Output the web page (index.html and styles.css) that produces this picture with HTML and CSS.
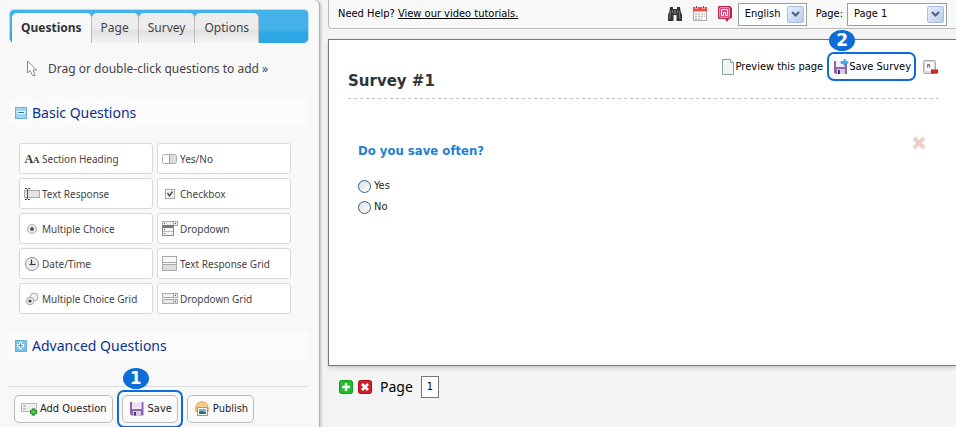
FILE: index.html
```html
<!DOCTYPE html>
<html lang="en">
<head>
<meta charset="utf-8">
<title>Survey editor</title>
<link rel="stylesheet" href="styles.css">
</head>
<body>
<div class="app">
  <aside class="sidebar">
    <nav class="tabs">
      <button class="tab tab-active" type="button">Questions</button>
      <button class="tab" type="button">Page</button>
      <button class="tab" type="button">Survey</button>
      <button class="tab" type="button">Options</button>
    </nav>
    <p class="hint">
      <svg width="12" height="17" viewBox="0 0 12 17"><path d="M1.500 1v12l2.500-2.500 2.500 5h2.500l-2-5.500h3.500z" fill="#fff" stroke="#888"/></svg>
      Drag or double-click questions to add »
    </p>
    <h2 class="group">
      <svg width="12" height="12" viewBox="0 0 12 12"><rect x=".5" y=".5" width="11" height="11" fill="#9fd3ee" stroke="#6aaedb"/><path d="M2 5.500h8" stroke="#fff" stroke-width="3"/><path d="M3 5.500h6" stroke="#2f76ad"/></svg>
      Basic Questions
    </h2>
    <div class="types">
      <button class="type" type="button"><span class="aa">A<small>A</small></span>Section Heading</button>
      <button class="type" type="button"><svg class="ico" viewBox="0 0 16 16"><rect x=".5" y="3.500" width="14" height="9" rx="2" fill="#fff" stroke="#aaa"/><path d="M8 4h4a2 2 0 0 1 2 2v4a2 2 0 0 1-2 2H8z" fill="#ddd"/><path d="M7.500 4v8" stroke="#999"/></svg>Yes/No</button>
      <button class="type" type="button"><svg class="ico" viewBox="0 0 16 16"><rect x=".5" y="4.500" width="15" height="7" fill="#e4e4e4" stroke="#aaa"/><path d="M1 2.500h2M4 2.500h2M1 13.500h2M4 13.500h2M3.500 3v10" stroke="#555" fill="none"/></svg>Text Response</button>
      <button class="type" type="button"><svg class="ico" viewBox="0 0 16 16"><rect x="3.500" y="3.500" width="9" height="9" fill="#f3f3f3" stroke="#aaa"/><path d="M5.500 7l2 3 3-4.500" fill="none" stroke="#555" stroke-width="1.500"/></svg>Checkbox</button>
      <button class="type" type="button"><svg class="ico" viewBox="0 0 16 16"><circle cx="8" cy="8" r="4.500" fill="#eee" stroke="#aaa"/><circle cx="8" cy="8" r="2" fill="#555"/></svg>Multiple Choice</button>
      <button class="type" type="button"><svg class="ico" viewBox="0 0 16 16"><rect x=".5" y=".5" width="15" height="4" fill="#eee" stroke="#aaa"/><path d="M11.500 1v3" stroke="#aaa"/><rect x="13" y="2" width="1" height="1" fill="#444"/><rect x=".5" y="4.500" width="11" height="10" fill="#f3f3f3" stroke="#888"/><rect x="1" y="4" width="10" height="3" fill="#777"/><path d="M1 10.500h10" stroke="#bbb"/><path d="M2 2.500h1M2 8.500h1M2 12.500h1" stroke="#444"/></svg>Dropdown</button>
      <button class="type" type="button"><svg class="ico" viewBox="0 0 16 16"><circle cx="8" cy="8" r="6.500" fill="#dcebe8" stroke="#8a9090"/><circle cx="8" cy="8" r="5" fill="none" stroke="#f8ffff"/><path d="M7.500 3.500v5h4M7 8.500H5.500" fill="none" stroke="#333" stroke-width="1.200"/></svg>Date/Time</button>
      <button class="type" type="button"><svg class="ico" viewBox="0 0 16 16"><rect x=".5" y=".5" width="14" height="14" fill="#f7f7f7" stroke="#aaa"/><rect x="1" y="9" width="13" height="5" fill="#ddd"/><path d="M1 6.500h13M1 8.500h13" stroke="#aaa"/></svg>Text Response Grid</button>
      <button class="type" type="button"><svg class="ico" viewBox="0 0 16 16"><circle cx="10" cy="6" r="4" fill="#eee" stroke="#aaa"/><circle cx="6" cy="10" r="3.800" fill="#eee" stroke="#aaa"/><circle cx="6" cy="10" r="1.600" fill="#444"/></svg>Multiple Choice Grid</button>
      <button class="type" type="button"><svg class="ico" viewBox="0 0 16 16"><rect x=".5" y="2.500" width="15" height="4" fill="#f3f3f3" stroke="#aaa"/><rect x=".5" y="8.500" width="15" height="4" fill="#e8e8e8" stroke="#aaa"/><path d="M11.500 3v3M11.500 9v3" stroke="#aaa"/><path d="M13 4.500h1M13 10.500h1" stroke="#444"/></svg>Dropdown Grid</button>
    </div>
    <h2 class="group">
      <svg width="12" height="12" viewBox="0 0 12 12"><rect x=".5" y=".5" width="11" height="11" fill="#7ec4e8" stroke="#6aaedb"/><path d="M2 5.500h7M5.500 2v7" stroke="#fff" stroke-width="3"/><path d="M3 5.500h5M5.500 3v5" stroke="#4c95c8"/></svg>
      Advanced Questions
    </h2>
    <div class="actions">
      <button class="action" type="button"><svg class="ico" viewBox="0 0 16 16"><rect x=".5" y="2.500" width="15" height="8" fill="#eee" stroke="#bbb"/><path d="M2 5h3M2 8h3" stroke="#999"/><path d="M12.500 7.500v7M9 11h7" stroke="#187818" stroke-width="3.500"/><path d="M12.500 8.500v5M10 11h5" stroke="#48d048" stroke-width="2"/></svg>Add Question</button>
      <span class="mark"><button class="action" type="button"><svg class="ico" viewBox="0 0 16 16"><path d="M1 1h13.500v13.500H2.500L1 13z" fill="#8f62b4"/><rect x="3" y="1" width="9.500" height="7" fill="#f5eefa"/><path d="M3 3h9.500M3 5h9.500" stroke="#dfd0e8"/><rect x="4" y="10" width="8" height="4.500" fill="#d8cce0"/><rect x="5" y="11" width="2" height="3.500" fill="#51366c"/></svg>Save</button><b class="badge">1</b></span>
      <button class="action" type="button"><svg class="ico" viewBox="0 0 16 16"><path d="M2 11V7a6 6 0 0 1 12 0v4" fill="#ffe2b5" stroke="#f3a651" stroke-width="1.500"/><path d="M4.500 7a3.500 3.500 0 0 1 7 0" fill="none" stroke="#f3a651"/><rect x="3.500" y="6.500" width="10" height="8" fill="#fff" stroke="#999"/><rect x="5" y="8" width="7" height="5" fill="#70b3dc"/><path d="M5 13v-2l3-1 4 2v1z" fill="#376944"/></svg>Publish</button>
    </div>
  </aside>

  <main class="main">
    <header class="topbar">
      <p class="help">Need Help? <a href="#tutorials">View our video tutorials.</a></p>
      <button class="tool" type="button" aria-label="Find"><svg class="ico" viewBox="0 0 16 16"><path d="M3 1h3v2h4V1h3l.5 4L15 9v6H9.500V9h-3v6H1V9l1.500-4z" fill="#333"/><path d="M3.500 5L2.500 13M12 5l1 8M5.500 4v3M10.500 4v3" stroke="#777"/><rect x="7" y="4" width="2" height="4" fill="#666"/></svg></button>
      <button class="tool" type="button" aria-label="Calendar"><svg class="ico" viewBox="0 0 16 16"><rect x="1.500" y="1.500" width="13" height="13" fill="#fff" stroke="#aaa"/><rect x="1" y="1" width="14" height="4.500" fill="#ec4a43"/><path d="M4.500 0v3M11.500 0v3" stroke="#fff" stroke-width="2"/><path d="M4.500 0v2.500M11.500 0v2.500" stroke="#744"/><path d="M3 8h10M3 10.500h10M3 13h7" stroke="#bbb" stroke-width="1.500" stroke-dasharray="2 1"/></svg></button>
      <button class="tool" type="button" aria-label="Comments"><svg class="ico" viewBox="0 0 16 16"><path d="M2 0h11l2 2v10l-3 1-2 3-2-3H2l-1-1V1z" fill="#b9234f"/><rect x="2.500" y="1.500" width="10" height="10" rx="1" fill="#dc4c76" stroke="#f29bb5"/><path d="M4.500 9.500v-6h6v6h-2v-3h-2v3z" fill="none" stroke="#fff"/></svg></button>
      <span class="pick pick-lang"><select aria-label="Language"><option>English</option></select><span class="arrow"><svg width="9" height="6" viewBox="0 0 9 6"><path d="M1 1l3.500 3.500L8 1" fill="none" stroke="#4d6185" stroke-width="2"/></svg></span></span>
      <label for="page">Page:</label>
      <span class="pick pick-page"><select id="page"><option>Page 1</option></select><span class="arrow"><svg width="9" height="6" viewBox="0 0 9 6"><path d="M1 1l3.500 3.500L8 1" fill="none" stroke="#4d6185" stroke-width="2"/></svg></span></span>
    </header>

    <section class="sheet">
      <div class="sheet-head">
        <h1>Survey #1</h1>
        <div class="links">
          <a href="#preview"><svg class="ico" viewBox="0 0 16 16"><path d="M2.500.5h8l3 3v12h-11z" fill="#eef6f5" stroke="#87a09e"/><path d="M10.500.5v3h3" fill="#fff" stroke="#87a09e"/></svg>Preview this page</a>
          <a class="mark" href="#save"><svg class="ico" viewBox="0 0 16 16"><path d="M1 2h13v13H2.500L1 13.500z" fill="#8f62b4"/><rect x="3" y="2" width="9" height="6" fill="#f5eefa"/><rect x="4" y="10" width="8" height="5" fill="#d8cce0"/><rect x="5" y="11" width="2" height="4" fill="#51366c"/><path d="M8 2.500h3V0l4.500 3.500L11 7V4.500H8z" fill="#45aee8" stroke="#2a7dbb" stroke-width=".5"/></svg>Save Survey<b class="badge">2</b></a>
          <button class="tool" type="button" aria-label="Remove"><svg class="ico" viewBox="0 0 16 16"><rect x="1.500" y="1.500" width="12" height="13" rx="1" fill="#d8d8d8" stroke="#aaa"/><rect x="3" y="3" width="9" height="9" fill="#f8f8f8"/><path d="M5.500 8.500V5.500h2v3M5.500 7h2" fill="none" stroke="#777"/><rect x="9.500" y="11" width="6" height="3" fill="#e02c2c" stroke="#b61c1c"/></svg></button>
        </div>
      </div>
      <fieldset class="question">
        <legend>Do you save often?</legend>
        <label><input type="radio" name="save">Yes</label>
        <label><input type="radio" name="save">No</label>
        <button class="tool remove" type="button" aria-label="Delete question"><svg class="ico" viewBox="0 0 16 16"><path d="M3 3l10 10M13 3L3 13" stroke="#f1cccc" stroke-width="4"/></svg></button>
      </fieldset>
    </section>

    <footer class="pager">
      <button class="tool" type="button" aria-label="Add page"><svg width="14" height="14" viewBox="0 0 14 14"><rect x=".5" y=".5" width="13" height="13" rx="2" fill="#22bd2b" stroke="#149c20"/><path d="M7 3v8M3 7h8" stroke="#fff" stroke-width="2.400"/></svg></button>
      <button class="tool" type="button" aria-label="Delete page"><svg width="14" height="14" viewBox="0 0 14 14"><rect x=".5" y=".5" width="13" height="13" rx="2" fill="#cf1f28" stroke="#a5101a"/><path d="M4 4l6 6M10 4l-6 6" stroke="#fff" stroke-width="2.600"/></svg></button>
      <span class="pager-label">Page</span>
      <button class="number" type="button">1</button>
    </footer>
  </main>
</div>
</body>
</html>
```
FILE: styles.css
```css
* { box-sizing: border-box; }
body {
  margin: 0;
  background: #f4f4f4;
  color: #000;
  font: 11px/16px "DejaVu Sans Condensed", "DejaVu Sans", sans-serif;
}
h1, h2, p { margin: 0; font-weight: normal; }
button { font: inherit; color: inherit; padding: 0; border: 0; background: none; }
svg { display: block; flex: none; }
.ico { width: 16px; height: 16px; }
.app { display: flex; min-height: 100vh; overflow: hidden; }

.sidebar {
  flex: none;
  width: 320px;
  padding: 9px 10px 0 9px;
  background: #f8f8f8;
  border-right: 1px solid #b0b0b0;
  border-top-right-radius: 6px;
  box-shadow: 1px 0 3px #bbb;
}
.tabs {
  display: flex;
  height: 34px;
  padding: 3px 2px 0;
  border: 1px solid #b9dcee;
  border-bottom: 0;
  border-radius: 5px;
  background: linear-gradient(#44b2e8 60%, #2ba7e3 70%);
}
.tab {
  padding: 0 9px;
  border-right: 1px solid #bbb;
  border-radius: 5px 5px 0 0;
  background: linear-gradient(#ededed 50%, #e2e2e2 60%, #f4f4f4);
  color: #444;
  font: 12px/30px "Noto Sans", sans-serif;
}
.tab-active { background: #f8f8f8; color: #333; font-weight: bold; }
.hint {
  display: flex;
  align-items: center;
  gap: 10px;
  height: 55px;
  padding: 0 17px 4px;
  color: #444;
  font: 12px/16px "Noto Sans", sans-serif;
}
.group {
  display: flex;
  align-items: center;
  gap: 5px;
  height: 28px;
  padding: 1px 6px 0;
  background: #fbfbfb;
  color: #0b318f;
  font: 14px/20px "Noto Sans", sans-serif;
}
.types {
  display: grid;
  grid-template-columns: 1fr 1fr;
  gap: 4px;
  padding: 17px 18px 17px 10px;
}
.type {
  display: flex;
  align-items: center;
  gap: 2px;
  height: 31px;
  padding: 1px 4px 0;
  border: 1px solid #d9d9d9;
  border-radius: 3px;
  background: #fff;
  color: #444;
  font: 10px/16px "Noto Sans", sans-serif;
  white-space: nowrap;
}
.aa { width: 16px; color: #333; font: bold 12px/16px "Liberation Serif", serif; }
.aa small { font-size: 9px; }
.actions {
  display: flex;
  align-items: center;
  gap: 4px;
  margin-top: 27px;
  padding: 3px 5px 0;
  border-top: 1px solid #ddd;
}
.action {
  display: flex;
  align-items: center;
  gap: 3px;
  height: 28px;
  padding: 0 5px 0 6px;
  border: 1px solid #bbb;
  border-radius: 5px;
  background: #fbfbfb;
  color: #222;
  white-space: nowrap;
}
.mark { position: relative; border: 2px solid #0c6cd8; border-radius: 7px; }
.actions .mark { padding: 3px; }
.badge {
  position: absolute;
  top: -24px;
  left: 4px;
  width: 26px;
  height: 21px;
  border-radius: 50%;
  background: #0c6cd8;
  color: #fff;
  font: bold 17px/21px "DejaVu Sans", sans-serif;
  text-align: center;
}

.main { flex: 1; min-width: 0; padding-left: 8px; }
.topbar {
  display: flex;
  align-items: center;
  height: 29px;
  padding: 0 9px;
  border: 1px solid #bbb;
  border-width: 0 0 1px 1px;
  border-bottom-left-radius: 4px;
  background: #f8f8f8;
}
.topbar .tool { margin-right: 9px; }
.help { flex: 1; }
.help a { color: inherit; }
.pick { position: relative; height: 23px; border: 1px solid #91a2a2; background: #fff; }
.pick-lang { width: 69px; margin-right: 9px; margin-left: -4px; }
.pick-page { width: 100px; margin-left: 4px; }
.pick select {
  width: 100%;
  height: 100%;
  padding: 0 20px 0 6px;
  border: 0;
  appearance: none;
  background: none;
  color: #000;
  font: inherit;
}
.arrow {
  position: absolute;
  top: 2px;
  right: 2px;
  display: grid;
  place-items: center;
  width: 17px;
  height: 17px;
  border: 1px solid #a8bfe0;
  border-radius: 2px;
  background: linear-gradient(135deg, #e6eefb, #b9cdec);
  pointer-events: none;
}
.sheet {
  height: 327px;
  margin-top: 10px;
  padding: 12px 18px 0 19px;
  border: 1px solid #777;
  border-right: 0;
  background: #fff;
  box-shadow: 0 2px 4px #ccc;
}
.sheet-head {
  display: flex;
  justify-content: space-between;
  height: 47px;
  background: repeating-linear-gradient(90deg, #bbb 0 3px, transparent 3px 6px) bottom / 100% 1px no-repeat;
}
.sheet-head h1 { margin-top: 17px; color: #2f353a; font: bold 15px/24px "DejaVu Sans", sans-serif; }
.links { display: flex; align-items: center; gap: 4px; height: 29px; }
.links a { display: flex; align-items: center; color: #000; text-decoration: none; white-space: nowrap; }
.links .mark { height: 29px; padding: 0 3px 0 4px; }
.links .tool { margin-left: 2px; }
.links .badge { left: 0; }
.question {
  position: relative;
  display: grid;
  gap: 5px;
  margin: 43px 0 0;
  padding: 19px 10px 0;
  border: 0;
}
.question legend { padding: 0; color: #2380d0; font: bold 13px/17px "DejaVu Sans Condensed", sans-serif; }
.question label { display: flex; align-items: center; gap: 3px; color: #222; }
.question input {
  width: 13px;
  height: 13px;
  margin: 0;
  border: 1px solid #2f6087;
  border-radius: 50%;
  appearance: none;
  background: linear-gradient(135deg, #ddd, #fff);
}
.remove { position: absolute; top: -24px; right: 11px; }
.pager { display: flex; align-items: center; gap: 5px; padding: 10px 11px; }
.pager-label { padding: 0 3px; font: 14px/22px "Noto Sans", sans-serif; }
.number { width: 18px; height: 22px; border: 1px solid #777; background: #fff; }
```
